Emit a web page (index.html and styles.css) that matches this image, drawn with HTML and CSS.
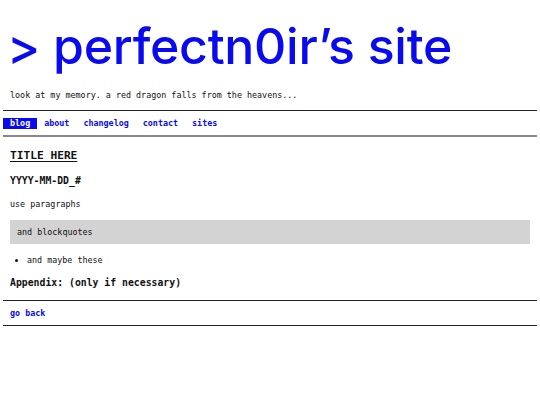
FILE: index.html
```html
<!DOCTYPE html>
<html>
<head>
<meta charset="utf-8">
<link rel="stylesheet" href="styles.css">
</head>
<body>
<header class="site-header">
  <h1 class="site-title">&gt; perfectn0ir’s site</h1>
  <p class="tagline">look at my memory. a red dragon falls from the heavens...</p>
</header>
<nav class="nav">
  <a class="nav-link active" href="#">blog</a>
  <a class="nav-link" href="#">about</a>
  <a class="nav-link" href="#">changelog</a>
  <a class="nav-link" href="#">contact</a>
  <a class="nav-link" href="#">sites</a>
</nav>
<main class="post">
  <h2 class="post-title">TITLE HERE</h2>
  <h3 class="post-date">YYYY-MM-DD_#</h3>
  <p class="post-text">use paragraphs</p>
  <blockquote class="quote">and blockquotes</blockquote>
  <ul class="list">
    <li>and maybe these</li>
  </ul>
  <h3 class="appendix">Appendix: (only if necessary)</h3>
</main>
<footer class="footer">
  <a class="back" href="#">go back</a>
</footer>
</body>
</html>
```

FILE: styles.css
```css
html, body {
  background: #ffffff;
}
body {
  margin: 0 3px;
  font-family: "DejaVu Sans Mono", "Liberation Mono", monospace;
  color: #111;
}
.site-header {
  padding: 0 7px;
}
.site-title {
  margin: 0 0 0 -3px;
  padding-top: 15px;
  font-family: Inter, "Noto Sans", sans-serif;
  font-weight: 500;
  font-size: 50px;
  line-height: 62px;
  letter-spacing: -0.3px;
  color: #0a0aee;
}
.tagline {
  margin: 12px 0 0;
  font-size: 8.4px;
  line-height: 12px;
}
.nav {
  margin-top: 9px;
  border-top: 1px solid #222;
  border-bottom: 2px solid #888;
  padding: 7px 0 6px;
  display: flex;
}
.nav-link {
  font-size: 8.4px;
  font-weight: bold;
  line-height: 11px;
  padding: 0 7px;
  color: #0a0aee;
  text-decoration: none;
}
.nav-link.active {
  background: #0a0aee;
  color: #fff;
}
.post {
  padding: 11px 7px 10px;
}
.post-title {
  margin: 0;
  font-size: 11.2px;
  line-height: 16px;
  text-decoration: underline;
  text-underline-offset: 2px;
}
.post-date {
  margin: 10px 0 0;
  font-size: 9.8px;
  line-height: 14px;
}
.post-text {
  margin: 10px 0 0;
  font-size: 8.4px;
  line-height: 12px;
}
.quote {
  margin: 10px 0 0;
  padding: 6px 7px;
  background: #d3d3d3;
  font-size: 8.4px;
  line-height: 12px;
}
.list {
  margin: 10px 0 0;
  padding-left: 17px;
  font-size: 8.4px;
  line-height: 12px;
}
.appendix {
  margin: 10px 0 0;
  font-size: 9.8px;
  line-height: 14px;
}
.footer {
  display: flex;
  border-top: 1px solid #222;
  border-bottom: 1px solid #222;
  padding: 7px 7px 6px;
}
.back {
  font-size: 8.4px;
  font-weight: bold;
  line-height: 11px;
  color: #0a0aee;
  text-decoration: none;
}
```
